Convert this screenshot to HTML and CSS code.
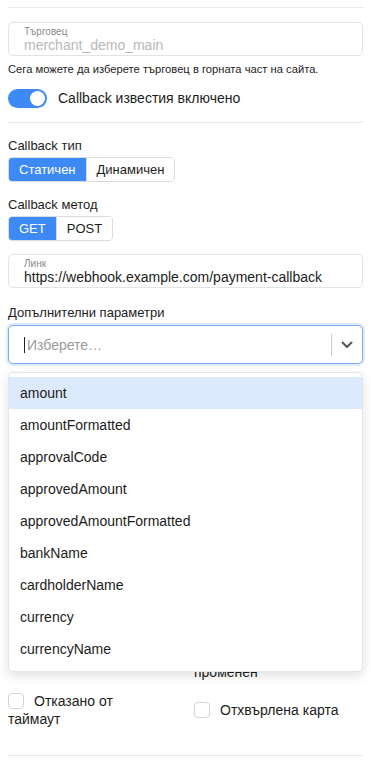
FILE: index.html
```
<!DOCTYPE html>
<html lang="bg">
<head>
<meta charset="utf-8">
<title>Callback настройки</title>
<link rel="stylesheet" href="styles.css">
</head>
<body>
<div class="page">
  <hr class="rule rule-top">

  <div class="field field-disabled">
    <span class="field-label">Търговец</span>
    <span class="field-value">merchant_demo_main</span>
  </div>
  <p class="help">Сега можете да изберете търговец в горната част на сайта.</p>

  <div class="toggle-row">
    <span class="toggle"><span class="knob"></span></span>
    <span class="toggle-label">Callback известия включено</span>
  </div>

  <hr class="rule rule-mid">

  <div class="label">Callback тип</div>
  <div class="btn-group">
    <span class="btn active">Статичен</span>
    <span class="btn">Динамичен</span>
  </div>

  <div class="label label-gap">Callback метод</div>
  <div class="btn-group">
    <span class="btn active">GET</span>
    <span class="btn">POST</span>
  </div>

  <div class="field field-link">
    <span class="field-label">Линк</span>
    <span class="field-value dark">https://webhook.example.com/payment-callback</span>
  </div>

  <div class="label label-params">Допълнителни параметри</div>
  <div class="select-wrap">
    <div class="select">
      <div class="select-value"><span class="caret"></span><span class="placeholder">Изберете…</span></div>
      <span class="sep"></span>
      <span class="indicator">
        <svg width="12" height="8" viewBox="0 0 12 8"><path d="M1.5 1.5 L6 6 L10.5 1.5" fill="none" stroke="#555" stroke-width="2" stroke-linecap="round" stroke-linejoin="round"/></svg>
      </span>
    </div>
    <ul class="menu">
      <li class="opt focused">amount</li>
      <li class="opt">amountFormatted</li>
      <li class="opt">approvalCode</li>
      <li class="opt">approvedAmount</li>
      <li class="opt">approvedAmountFormatted</li>
      <li class="opt">bankName</li>
      <li class="opt">cardholderName</li>
      <li class="opt">currency</li>
      <li class="opt">currencyName</li>
    </ul>
  </div>

  <div class="checks">
    <label class="check check-right"><span class="box"></span>Статусът е ръчно променен</label>
    <label class="check"><span class="box"></span>Отказано от таймаут</label>
    <label class="check"><span class="box"></span>Отхвърлена карта</label>
  </div>

  <hr class="rule rule-bottom">
</div>
</body>
</html>
```

FILE: styles.css
```
* { box-sizing: border-box; }
html, body { margin: 0; padding: 0; background: #fff; }
body {
  font-family: "Liberation Sans", Arial, sans-serif;
  color: #1c1c1c;
  font-size: 14px;
}
.page { padding: 0 8px; }

.rule { border: 0; border-top: 1px solid #e9e9e9; margin: 0; height: 0; }
.rule-top { margin-top: 7px; }
.rule-mid { margin-top: 14px; }
.rule-bottom { margin-top: 27px; }

.field {
  display: flex;
  flex-direction: column;
  height: 34px;
  border: 1px solid #e3e3e3;
  border-radius: 5px;
  padding: 3px 15px 2px;
}
.field-disabled { margin-top: 14px; }
.field-link { margin-top: 13px; }
.field-label { font-size: 10px; line-height: 11px; color: #8a8a8a; }
.field-value { font-size: 14px; line-height: 16px; color: #b8b8b8; }
.field-value.dark { color: #1c1c1c; }

.help { margin: 6px 0 0; font-size: 11.2px; line-height: 14px; color: #1c1c1c; }

.toggle-row { display: flex; align-items: center; gap: 11px; margin-top: 12px; height: 20px; }
.toggle {
  position: relative;
  width: 39px; height: 19px;
  border-radius: 10px;
  background: #3d8af7;
  flex: none;
}
.knob {
  position: absolute;
  right: 2px; top: 2px;
  width: 15px; height: 15px;
  border-radius: 50%;
  background: #fff;
}
.toggle-label { font-size: 14px; line-height: 18px; }

.label { font-size: 13px; line-height: 16px; margin-top: 15px; }
.label-gap { margin-top: 15px; }
.label-params { margin-top: 17px; }

.btn-group {
  display: inline-flex;
  margin-top: 3px;
  height: 25px;
  border-radius: 4px;
  border: 1px solid #dcdcdc;
  overflow: hidden;
}
.btn-group + .field { margin-top: 13px; }
.btn {
  display: flex;
  align-items: center;
  padding: 0 10px;
  font-size: 13px;
  color: #1c1c1c;
  background: #fff;
}
.btn.active { background: #3d8af7; color: #fff; }
.btn + .btn { border-left: 1px solid #dcdcdc; }

.select-wrap { position: relative; margin-top: 4px; }
.select {
  display: flex;
  align-items: center;
  height: 39px;
  border: 1px solid #7aacf8;
  border-radius: 5px;
  box-shadow: 0 0 0 2px rgba(61, 138, 247, 0.16);
  background: #fff;
}
.select-value { flex: 1; display: flex; align-items: center; padding-left: 15px; }
.caret { width: 1px; height: 16px; background: #222; margin-right: 2px; }
.placeholder { color: #9a9a9a; font-size: 14px; }
.sep { width: 1px; height: 22px; background: #cccccc; }
.indicator { width: 30px; display: flex; justify-content: center; align-items: center; }

.menu {
  position: absolute;
  left: 0; right: 0;
  top: calc(100% + 8px);
  margin: 0;
  padding: 4px 0 6px;
  list-style: none;
  background: #fff;
  border: 1px solid #e6e6e6;
  border-radius: 5px;
  box-shadow: 0 4px 12px rgba(0, 0, 0, 0.12);
  z-index: 5;
}
.opt { height: 32px; line-height: 32px; padding-left: 11px; font-size: 14px; color: #1c1c1c; }
.opt.focused { background: #dde9fc; }

.checks {
  display: grid;
  grid-template-columns: 160px 1fr;
  column-gap: 26px;
  row-gap: 11px;
  align-items: center;
  margin-top: 281px;
}
.check-right { grid-column: 2; }
.check { display: block; font-size: 14px; line-height: 18px; }
.box {
  display: inline-block;
  vertical-align: top;
  width: 16px; height: 16px;
  margin: 1px 10px 0 0;
  border: 1px solid #d3d3d3;
  border-radius: 4px;
  background: #fff;
}
```
